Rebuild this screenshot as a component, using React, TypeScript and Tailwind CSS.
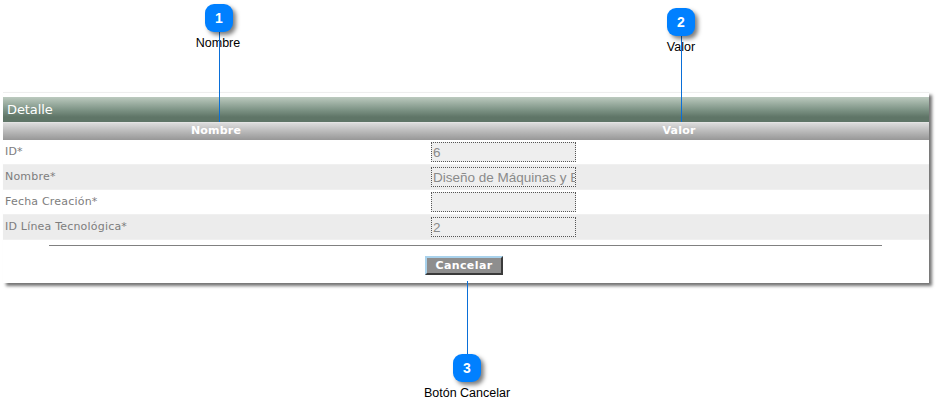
const filas = [
  { etiqueta: 'ID*', valor: '6' },
  { etiqueta: 'Nombre*', valor: 'Diseño de Máquinas y Equipos' },
  { etiqueta: 'Fecha Creación*', valor: '' },
  { etiqueta: 'ID Línea Tecnológica*', valor: '2' },
]

// Globo numerado con su línea y su texto
function Marcador({ numero, texto, className, linea, textoClass }: { numero: number; texto: string; className: string; linea: string; textoClass: string }) {
  return (
    <>
      <div className={`absolute w-px bg-[#0a6fd8] z-20 ${linea}`}></div>
      <div className={`absolute w-[28px] h-[28px] rounded-[9px] bg-[#0080ff] text-white flex items-center justify-center text-[14px] font-['Liberation_Sans',sans-serif] font-bold shadow-[3px_3px_4px_rgba(0,0,0,0.5)] z-30 ${className}`}>
        {numero}
      </div>
      <div className={`absolute text-[12.5px] leading-[14px] text-black whitespace-nowrap font-['Liberation_Sans',sans-serif] -translate-x-1/2 z-10 ${textoClass}`}>
        {texto}
      </div>
    </>
  )
}

export default function App() {
  return (
    <div className="relative w-[942px] h-[403px] bg-white overflow-hidden font-['DejaVu_Sans',sans-serif]">
      <div className="pt-[92px] pl-[3px]">
        {/* Panel de detalle */}
        <div className="w-[926px] h-[191px] bg-white border-t border-[#eeeeee] pt-[4px] shadow-[3px_3px_3px_rgba(0,0,0,0.55)]">
          <div className="h-[25px] pl-[4px] flex items-center text-[13px] tracking-[-0.1px] text-white bg-gradient-to-b from-[#bccabf] via-[#7f9587] to-[#5f7567] from-0% via-50% to-80%">
            Detalle
          </div>
          <div className="h-[18px] grid grid-cols-[426px_500px] text-[11px] font-bold tracking-[0.2px] text-white bg-gradient-to-b from-[#dcdcdc] to-[#979797] border-t border-[#e4e4e4] items-center">
            <div className="text-center">Nombre</div>
            <div className="text-center">Valor</div>
          </div>
          {filas.map((fila, i) => (
            <div key={fila.etiqueta} className={`h-[25px] flex items-center border-b border-[#f0f0f0] ${i % 2 === 1 ? 'bg-[#ececec]' : 'bg-white'}`}>
              <div className="w-[428px] pl-[2px] pt-[1px] text-[11px] tracking-[0.2px] text-[#7d7d7d]">{fila.etiqueta}</div>
              <div className="w-[145px] h-[20px] border border-dotted border-[#555555] bg-[#eeeeee] text-[13.5px] leading-[19px] text-[#8a8a8a] pl-[1px] overflow-hidden whitespace-nowrap font-['Liberation_Sans',sans-serif]">
                {fila.valor}
              </div>
            </div>
          ))}
          <div className="mt-[5px] ml-[46px] mr-[47px] h-px bg-[#808080]"></div>
          <div className="mt-[10px] flex justify-center pr-[4px]">
            <button className="w-[78px] h-[19px] pt-[1px] bg-[#8e8e8e] text-white text-[11px] font-bold tracking-[0.4px] border-2 border-t-[#a9d2ec] border-l-[#a9d2ec] border-r-[#3a3a3a] border-b-[#3a3a3a] flex items-center justify-center">
              Cancelar
            </button>
          </div>
        </div>
      </div>

      <Marcador numero={1} texto="Nombre" className="left-[205px] top-[4px]" linea="left-[219px] top-[30px] h-[92px]" textoClass="left-[218px] top-[36px]" />
      <Marcador numero={2} texto="Valor" className="left-[667px] top-[8px]" linea="left-[681px] top-[34px] h-[88px]" textoClass="left-[681px] top-[40px]" />
      <Marcador numero={3} texto="Botón Cancelar" className="left-[453px] top-[354px]" linea="left-[467px] top-[281px] h-[75px]" textoClass="left-[467px] top-[386px]" />
    </div>
  )
}
